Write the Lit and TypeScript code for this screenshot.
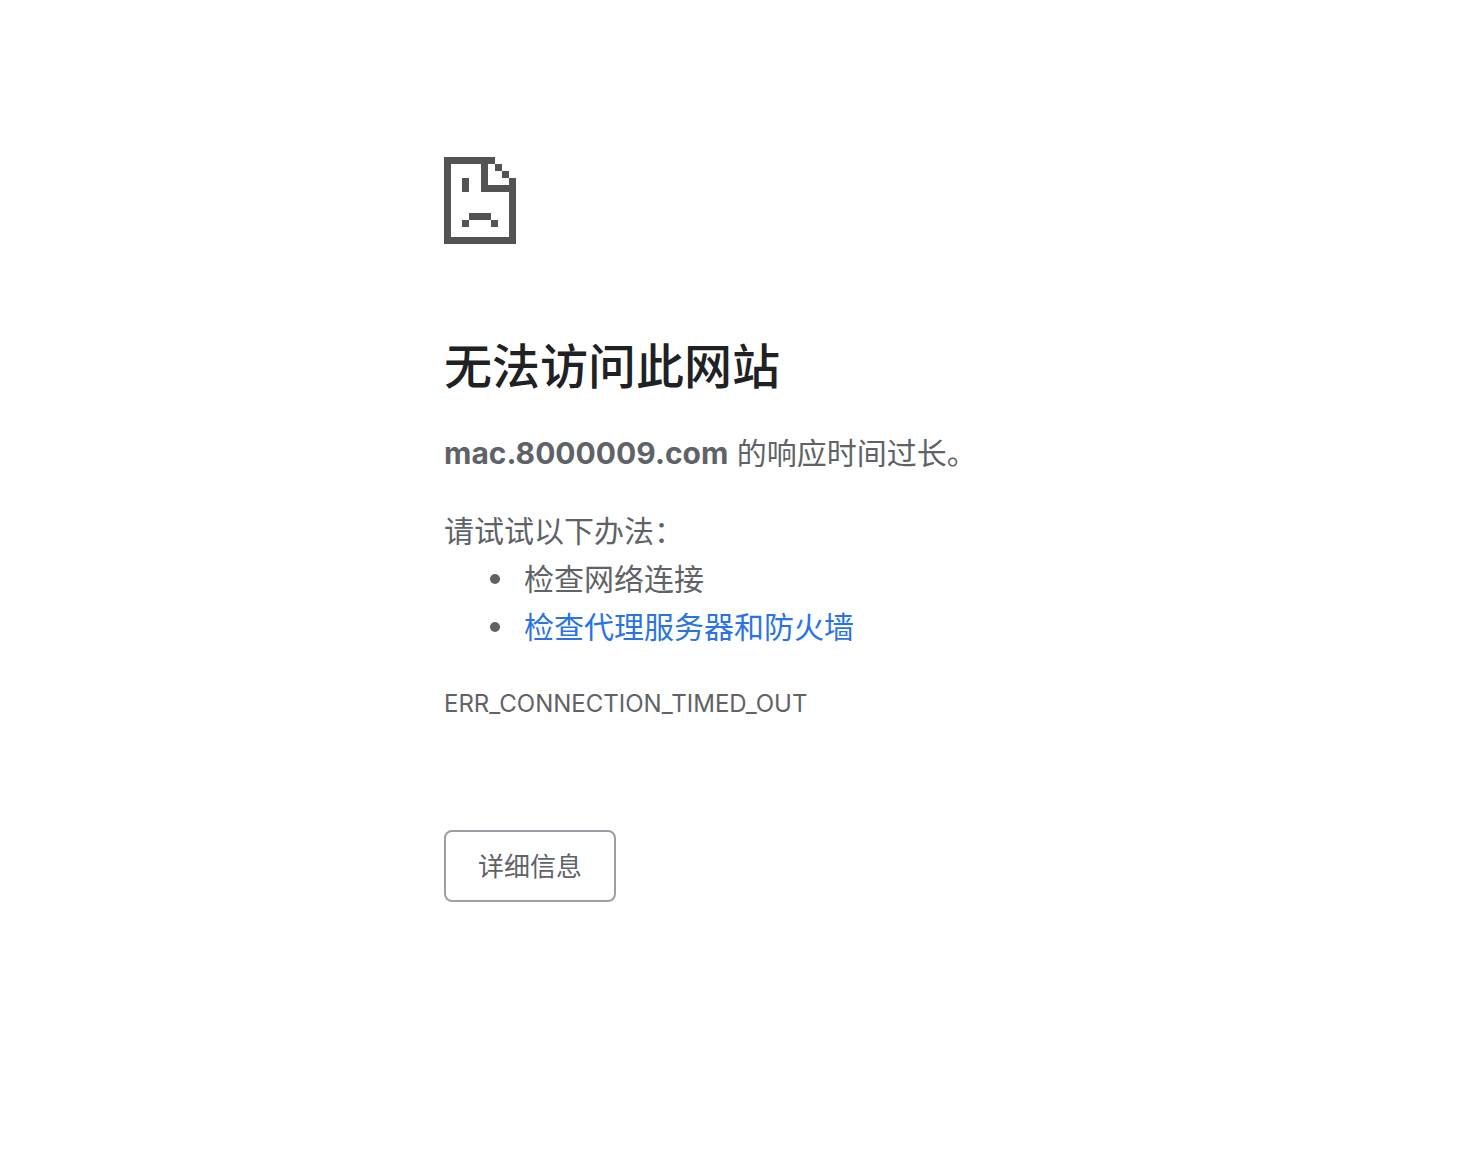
import { LitElement, html, css } from "lit";
import { customElement, state } from "lit/decorators.js";

@customElement("app-root")
export class AppRoot extends LitElement {
  static styles = css`
    :host {
      display: block;
      min-height: 100vh;
      background: #ffffff;
      color: #5f6368;
      font-family: Inter, "Noto Sans CJK SC", sans-serif;
      font-size: 30px;
      line-height: 48px;
    }
    .page {
      box-sizing: border-box;
      max-width: 574px;
      margin: 0 auto;
      padding: 157px 0 48px;
    }
    .icon {
      display: block;
      width: 72px;
      height: 87px;
      margin-bottom: 87px;
    }
    .title {
      margin: 0 0 26px;
      color: #202124;
      font-size: 48px;
      font-weight: 500;
      line-height: 72px;
    }
    .text {
      margin: 0;
    }
    .summary {
      margin-bottom: 30px;
    }
    .host {
      font-weight: 700;
    }
    .list {
      margin: 0;
      padding-left: 46px;
      list-style: none;
    }
    .item {
      display: flex;
      align-items: center;
      gap: 24px;
    }
    .item::before {
      content: "";
      flex: none;
      width: 10px;
      height: 10px;
      border-radius: 50%;
      background: #5f6368;
    }
    .link {
      color: #2a73e5;
      text-decoration: none;
    }
    .code {
      margin: 35px 0 0;
      font-size: 24px;
      line-height: 36px;
    }
    .details {
      display: block;
      margin-top: 108px;
      padding: 17px 32px 15px;
      border: 2px solid #9aa0a6;
      border-radius: 8px;
      background: #ffffff;
      color: #5f6368;
      font-family: inherit;
      font-size: 26px;
      line-height: 36px;
      cursor: pointer;
    }
  `;

  @state() private expanded = false;

  private toggle() {
    this.expanded = !this.expanded;
  }

  render() {
    return html`
      <main class="page" lang="zh-CN">
        <svg class="icon" viewBox="0 0 72 87" fill="#535353" shape-rendering="crispEdges" aria-hidden="true">
          <path d="M0 0H51V7H44V28H65V21H72V87H0ZM7 7V80H65V35H37V7Z" fill-rule="evenodd" />
          <path d="M51 7H58V14H51ZM58 14H65V21H58Z" />
          <path d="M18 21H25V35H18ZM25 56H47V63H25ZM18 63H25V70H18ZM47 63H54V70H47Z" />
        </svg>
        <h1 class="title">无法访问此网站</h1>
        <p class="text summary"><strong class="host">mac.8000009.com</strong> 的响应时间过长。</p>
        <p class="text">请试试以下办法：</p>
        <ul class="list">
          <li class="item">检查网络连接</li>
          <li class="item"><a class="link" href="#proxy">检查代理服务器和防火墙</a></li>
        </ul>
        <p class="code">ERR_CONNECTION_TIMED_OUT</p>
        <button class="details" type="button" aria-expanded=${this.expanded} @click=${this.toggle}>详细信息</button>
      </main>
    `;
  }
}
